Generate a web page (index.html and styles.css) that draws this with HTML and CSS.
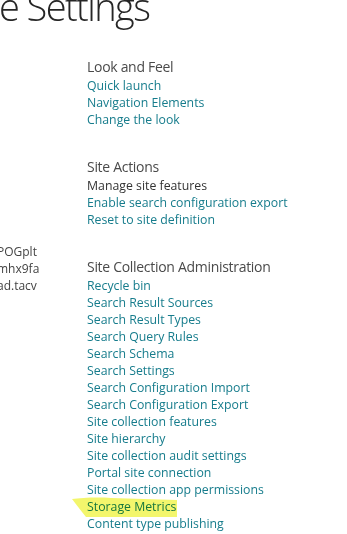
FILE: index.html
```html
<!DOCTYPE html>
<html lang="en">
<head>
<meta charset="utf-8">
<title>Site Settings</title>
<link rel="stylesheet" href="styles.css">
</head>
<body>
<div class="page">
  <h1 class="title">e Settings</h1>
  <div class="content">
    <div class="side">
      <div class="side-line">POGplt</div>
      <div class="side-line">mhx9fa</div>
      <div class="side-line">ad.tacv</div>
    </div>
    <div class="main">
      <section class="group">
        <h2 class="group-title">Look and Feel</h2>
        <ul class="links">
          <li><a href="#">Quick launch</a></li>
          <li><a href="#">Navigation Elements</a></li>
          <li><a href="#">Change the look</a></li>
        </ul>
      </section>
      <section class="group">
        <h2 class="group-title">Site Actions</h2>
        <ul class="links">
          <li><a href="#" class="visited">Manage site features</a></li>
          <li><a href="#">Enable search configuration export</a></li>
          <li><a href="#">Reset to site definition</a></li>
        </ul>
      </section>
      <section class="group">
        <h2 class="group-title">Site Collection Administration</h2>
        <ul class="links">
          <li><a href="#">Recycle bin</a></li>
          <li><a href="#">Search Result Sources</a></li>
          <li><a href="#">Search Result Types</a></li>
          <li><a href="#">Search Query Rules</a></li>
          <li><a href="#">Search Schema</a></li>
          <li><a href="#">Search Settings</a></li>
          <li><a href="#">Search Configuration Import</a></li>
          <li><a href="#">Search Configuration Export</a></li>
          <li><a href="#">Site collection features</a></li>
          <li><a href="#">Site hierarchy</a></li>
          <li><a href="#">Site collection audit settings</a></li>
          <li><a href="#">Portal site connection</a></li>
          <li><a href="#">Site collection app permissions</a></li>
          <li class="marked"><a href="#">Storage Metrics</a>
            <svg class="highlight" width="110" height="22" viewBox="0 0 110 22" aria-hidden="true">
              <path d="M1 2 C 10 1, 25 0, 40 1 L 106 3 L 106 20 L 15 20 C 10 14, 5 7, 1 2 Z" fill="#f2f55c" fill-opacity="0.9"/>
            </svg>
          </li>
          <li><a href="#">Content type publishing</a></li>
        </ul>
      </section>
    </div>
  </div>
</div>
</body>
</html>
```
FILE: styles.css
```css
html, body {
  margin: 0;
  padding: 0;
  background: #ffffff;
}

body {
  font-family: "Open Sans", "Noto Sans", sans-serif;
  color: #444444;
  overflow: hidden;
}

.page {
  width: 347px;
  height: 534px;
  overflow: hidden;
}

.title {
  margin: -8px 0 37px -1px;
  height: 28px;
  font-family: "Open Sans", "Noto Sans", sans-serif;
  font-size: 38px;
  line-height: 28px;
  font-weight: 300;
  letter-spacing: -1.6px;
  color: #262626;
  white-space: nowrap;
}

.content {
  display: flex;
  flex-direction: row;
}

.side {
  width: 87px;
  flex: none;
  margin-left: -3px;
  padding-top: 186px;
  font-size: 12px;
  line-height: 17px;
  color: #444444;
}

.side-line {
  height: 17px;
  white-space: nowrap;
}

.main {
  margin-left: 3px;
  display: flex;
  flex-direction: column;
  gap: 29px;
}

.group-title {
  margin: 0;
  font-family: "Open Sans", "Noto Sans", sans-serif;
  font-size: 14px;
  line-height: 20px;
  font-weight: 400;
  letter-spacing: -0.3px;
  color: #4a4a4a;
  white-space: nowrap;
}

.links {
  list-style: none;
  margin: 0;
  padding: 0;
}

.links li {
  height: 17px;
  font-size: 12.3px;
  line-height: 17px;
  white-space: nowrap;
}

.links a {
  color: #167c8c;
  text-decoration: none;
}

.links a.visited {
  color: #333333;
}

.marked {
  position: relative;
}

.highlight {
  position: absolute;
  left: -16px;
  top: -1px;
  mix-blend-mode: multiply;
  pointer-events: none;
}
```
